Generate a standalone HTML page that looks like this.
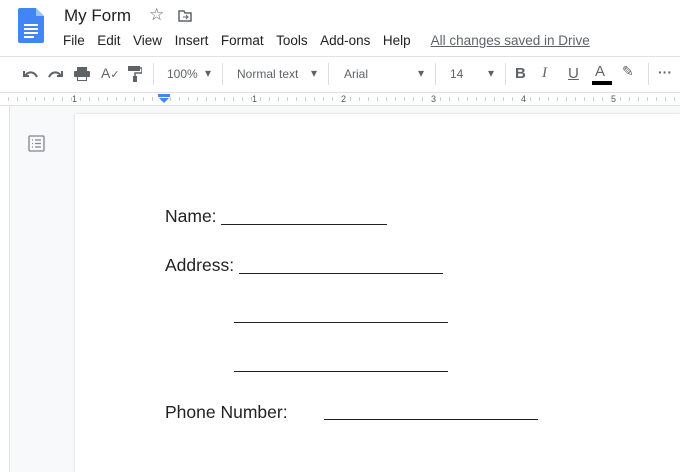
<!DOCTYPE html>
<html><head><style>
body{margin:0;width:680px;height:472px;overflow:hidden;background:#f8f9fa;font-family:"Liberation Sans",Arial,sans-serif;position:relative}
.a{position:absolute}
.menu span{margin-right:12.5px}
.tb{color:#5f6368;font-size:12px}
.doc{font-size:17.5px;color:#222;white-space:pre}
.ln{position:absolute;height:1px;background:#222}
</style></head><body>
<div class="a" style="left:0;top:0;width:680px;height:56px;background:#fff"></div>
<svg class="a" style="left:18px;top:8px" width="26" height="35" viewBox="0 0 26 35"><path d="M2 0h16l8 8v25a2 2 0 0 1-2 2H2a2 2 0 0 1-2-2V2a2 2 0 0 1 2-2z" fill="#4285f4"/><path d="M18 0v8h8z" fill="#a1c2fa"/><rect x="6" y="16" width="14" height="2" fill="#fff"/><rect x="6" y="20" width="14" height="2" fill="#fff"/><rect x="6" y="24" width="14" height="2" fill="#fff"/><rect x="6" y="28" width="10" height="2" fill="#fff"/></svg>
<div class="a" style="left:64px;top:6px;font-size:17px;color:#202124">My Form</div>
<div class="a" style="left:149px;top:5px;font-size:17px;color:#5f6368">☆</div>
<svg class="a" style="left:178px;top:10px" width="14" height="12"><path d="M1 1h5l1 2h6v8H1z" fill="none" stroke="#5f6368" stroke-width="1.5"/><path d="M5 7h5M8 5l2 2-2 2" stroke="#5f6368" fill="none"/></svg>
<div class="a menu" style="left:63px;top:33px;font-size:13.5px;color:#202124"><span>File</span><span>Edit</span><span>View</span><span>Insert</span><span>Format</span><span>Tools</span><span>Add-ons</span><span style="margin-right:20px">Help</span><span style="color:#5f6368;text-decoration:underline;margin:0">All changes saved in Drive</span></div>
<div class="a" style="left:0;top:56px;width:680px;height:1px;background:#e0e0e0"></div>
<div class="a" style="left:0;top:57px;width:680px;height:35px;background:#fff"></div>
<svg class="a" style="left:22px;top:68px" width="42" height="12"><path d="M3 8c3-5 9-5 12 1M2 3v5h5" fill="none" stroke="#5f6368" stroke-width="2"/><path d="M39 8c-3-5-9-5-12 1M40 3v5h-5" fill="none" stroke="#5f6368" stroke-width="2"/></svg>
<svg class="a" style="left:74px;top:67px" width="16" height="14"><rect x="3" y="0" width="10" height="4" fill="#5f6368"/><rect x="0" y="4" width="16" height="6" rx="1" fill="#5f6368"/><rect x="3" y="9" width="10" height="5" fill="#5f6368"/><rect x="4" y="10" width="8" height="3" fill="#fff"/></svg>
<div class="a tb" style="left:101px;top:65px;font-size:14px">A<span style="font-size:11px">✓</span></div>
<svg class="a" style="left:128px;top:66px" width="14" height="16"><rect x="0" y="0" width="12" height="5" fill="#5f6368"/><path d="M12 2h2v5H7v3" fill="none" stroke="#5f6368" stroke-width="1.5"/><rect x="5" y="10" width="4" height="6" fill="#5f6368"/></svg>
<div class="a" style="left:153px;top:63px;width:1px;height:22px;background:#dadce0"></div>
<div class="a tb" style="left:167px;top:67px">100%</div><div class="a tb" style="left:205px;top:66px">▾</div>
<div class="a" style="left:222px;top:63px;width:1px;height:22px;background:#dadce0"></div>
<div class="a tb" style="left:237px;top:67px">Normal text</div><div class="a tb" style="left:311px;top:66px">▾</div>
<div class="a" style="left:328px;top:63px;width:1px;height:22px;background:#dadce0"></div>
<div class="a tb" style="left:344px;top:67px">Arial</div><div class="a tb" style="left:418px;top:66px">▾</div>
<div class="a" style="left:435px;top:63px;width:1px;height:22px;background:#dadce0"></div>
<div class="a tb" style="left:450px;top:67px">14</div><div class="a tb" style="left:488px;top:66px">▾</div>
<div class="a" style="left:505px;top:63px;width:1px;height:22px;background:#dadce0"></div>
<div class="a tb" style="left:515px;top:65px;font-size:15px;font-weight:bold">B</div>
<div class="a tb" style="left:542px;top:65px;font-size:15px;font-style:italic;font-family:'Liberation Serif',serif">I</div>
<div class="a tb" style="left:568px;top:65px;font-size:15px;text-decoration:underline">U</div>
<div class="a tb" style="left:595px;top:63px;font-size:15px">A</div>
<div class="a" style="left:592px;top:81px;width:20px;height:4px;background:#000"></div>
<div class="a tb" style="left:622px;top:63px;font-size:14px">✎</div>
<div class="a" style="left:648px;top:63px;width:1px;height:22px;background:#dadce0"></div>
<div class="a tb" style="left:658px;top:64px;font-size:14px;font-weight:bold">···</div>
<div class="a" style="left:0;top:92px;width:680px;height:1px;background:#e0e0e0"></div>
<div class="a" style="left:0;top:93px;width:680px;height:12px;background:#fff;border-bottom:1px solid #e0e0e0"></div>
<div class="a" style="left:0;top:93px;width:680px;height:12px;background:repeating-linear-gradient(90deg,transparent 0 8px,#ccc 8px 9px);background-position:0 4px;background-size:9px 4px;background-repeat:repeat-x"></div>
<div class="a" style="left:72px;top:94px;font-size:9px;color:#555">1</div>
<div class="a" style="left:252px;top:94px;font-size:9px;color:#555;background:#fff">1</div>
<div class="a" style="left:341px;top:94px;font-size:9px;color:#555;background:#fff">2</div>
<div class="a" style="left:431px;top:94px;font-size:9px;color:#555;background:#fff">3</div>
<div class="a" style="left:521px;top:94px;font-size:9px;color:#555;background:#fff">4</div>
<div class="a" style="left:611px;top:94px;font-size:9px;color:#555;background:#fff">5</div>
<svg class="a" style="left:158px;top:94px" width="12" height="10"><rect x="0" y="0" width="12" height="3" fill="#4285f4"/><path d="M1 4h10l-5 5z" fill="#4285f4"/></svg>
<div class="a" style="left:0;top:106px;width:9px;height:366px;background:#fff;border-right:1px solid #e0e0e0"></div>
<svg class="a" style="left:28px;top:135px" width="17" height="17"><rect x="1" y="1" width="15" height="15" rx="1" fill="none" stroke="#80868b" stroke-width="1.3"/><path d="M4 5h1M7 5h6M4 8.5h1M7 8.5h6M4 12h1M7 12h6" stroke="#80868b" stroke-width="1.3"/></svg>
<div class="a" style="left:75px;top:114px;width:605px;height:358px;background:#fff;box-shadow:0 0 2px #ccc"></div>
<div class="a doc" style="left:165px;top:206px">Name:</div><div class="ln" style="left:221px;top:224px;width:166px"></div>
<div class="a doc" style="left:165px;top:255px">Address:</div><div class="ln" style="left:239px;top:273px;width:204px"></div>
<div class="ln" style="left:234px;top:322px;width:214px"></div>
<div class="ln" style="left:234px;top:371px;width:214px"></div>
<div class="a doc" style="left:165px;top:402px">Phone Number:</div><div class="ln" style="left:324px;top:419px;width:214px"></div>
</body></html>
